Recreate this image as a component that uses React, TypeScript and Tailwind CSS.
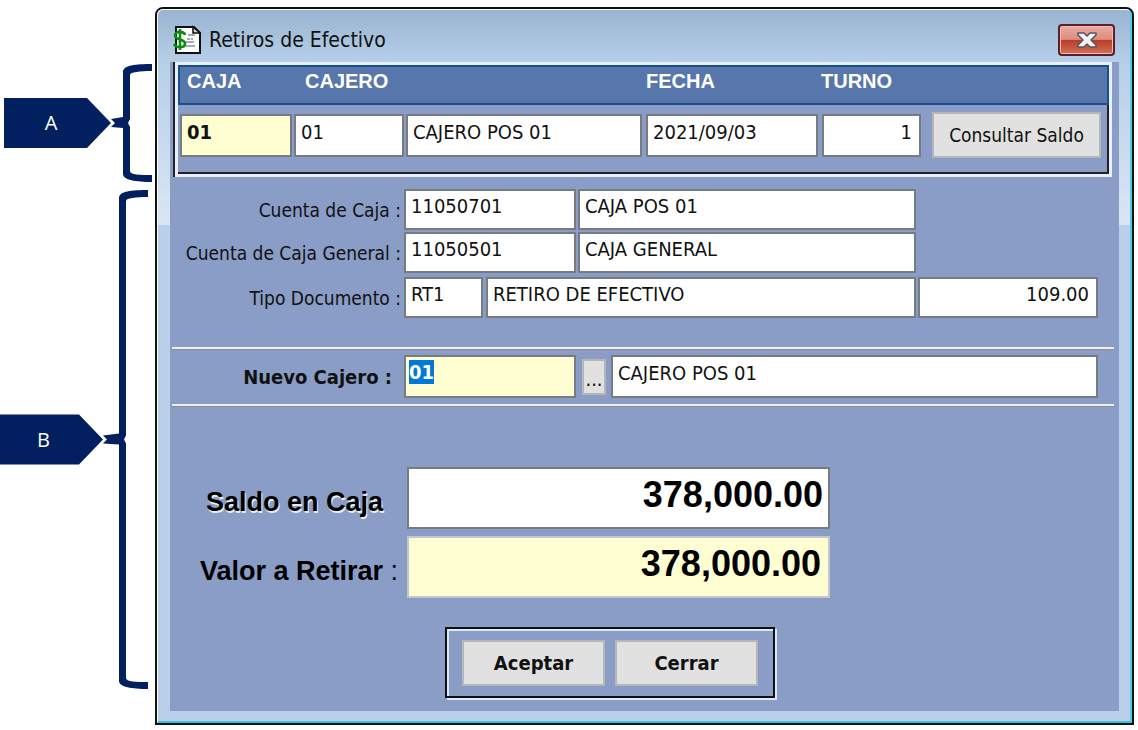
import { useEffect, useRef } from "react";
import type { ReactNode } from "react";
import clsx from "clsx";

type FieldProps = {
  id?: string;
  label?: string;
  value: string;
  className?: string;
};

function Field({ id, label, value, className }: FieldProps) {
  return (
    <input
      id={id}
      aria-label={label}
      defaultValue={value}
      className={clsx(
        "min-w-0 rounded-none border-2 border-[#777b82] px-[5px] pb-[7px] leading-6 outline-none",
        className
      )}
    />
  );
}

type CalloutProps = {
  letter: string;
  height: number;
  tipX: number;
  braceX: number;
  className?: string;
};

function Callout({ letter, height, tipX, braceX, className }: CalloutProps) {
  const mid = height / 2;
  const end = height;
  const inner = braceX + 7;
  const armEnd = braceX + 29;

  return (
    <div className="relative flex items-center">
      <svg width="152" height={height} viewBox={`0 0 152 ${height}`} fill="#02205f" aria-hidden="true">
        <path d={`M${tipX - 107} ${mid - 25}H${tipX - 24}L${tipX} ${mid}L${tipX - 24} ${mid + 25}H${tipX - 107}Z`} />
        <path
          d={`M${armEnd} 0C${armEnd - 16} 0 ${braceX} 1 ${braceX} 8V${mid - 6}L${tipX} ${mid - 4}L${tipX + 4} ${mid}L${tipX} ${mid + 4}L${braceX} ${mid + 5}V${end - 8}C${braceX} ${end - 2} ${armEnd - 16} ${end} ${armEnd} ${end}V${end - 7}C${armEnd - 12} ${end - 7} ${inner} ${end - 7} ${inner} ${end - 11}V${mid + 4}L${inner - 2} ${mid}L${inner} ${mid - 4}V11C${inner} 8 ${armEnd - 12} 7 ${armEnd} 7Z`}
        />
      </svg>
      <span
        className={clsx(
          "absolute text-center font-['Open_Sans',sans-serif] text-xl leading-6 text-white",
          className
        )}
      >
        {letter}
      </span>
    </div>
  );
}

function DocumentIcon() {
  return (
    <svg width="28" height="30" viewBox="0 0 28 30" aria-hidden="true">
      <path d="M3 2H21L27 8V28H3Z" fill="#fff" stroke="#111" strokeWidth="2" />
      <path d="M20 2V8H27Z" fill="#d8d8d8" stroke="#111" strokeWidth="1.6" />
      <path d="M15 10H22M14 14H17M18 14H20M13 17H21M13 21H22" stroke="#8b8f94" strokeWidth="1.6" />
      <path
        d="M12 10C11 6 2 5.500 2 10.500C2 15.500 12 13.500 12 18.500C12 23.500 3 23 1 19M7 4V25"
        fill="none"
        stroke="#0a8a12"
        strokeWidth="2.600"
      />
    </svg>
  );
}

function CloseIcon() {
  return (
    <svg width="20" height="16" viewBox="0 0 20 16" aria-hidden="true">
      <path
        d="M1 1H7L10 4L13 1H19V3L14 8L19 13V15H13L10 12L7 15H1V13L6 8L1 3Z"
        fill="#f3f3f3"
        stroke="#5a5463"
        strokeWidth="1.600"
        strokeLinejoin="round"
      />
    </svg>
  );
}

function FormLabel({ htmlFor, children }: { htmlFor: string; children: ReactNode }) {
  return (
    <label htmlFor={htmlFor} className="w-[234px] shrink-0 pr-[3px] text-right text-[19px] leading-6 whitespace-nowrap">
      {children}
    </label>
  );
}

const buttonClass = "border-2 border-[#b6b6b8] bg-[#e1e1e1] whitespace-nowrap";

function App() {
  const newCashierRef = useRef<HTMLInputElement>(null);

  useEffect(() => {
    newCashierRef.current?.focus();
    newCashierRef.current?.select();
  }, []);

  return (
    <div className="flex min-h-screen items-start overflow-hidden bg-white pt-[7px] pr-1 font-['DejaVu_Sans_Condensed','Noto_Sans',sans-serif] text-xl leading-6 text-[#111]">
      <aside className="flex w-[155px] shrink-0 flex-col gap-2 overflow-hidden pt-[57px]">
        <Callout letter="A" height={118} tipX={111} braceX={123} className="left-1 w-[94px]" />
        <Callout letter="B" height={499} tipX={103} braceX={119} className="left-0 w-[87px]" />
      </aside>

      <main className="min-w-0 flex-1 rounded-t-lg border-2 border-[#111] bg-[#bad0ea] bg-[linear-gradient(#98b3d0,#b7cfe9_54px,#dae6f4_216px,#bad0ea_216px)]">
        <div className="rounded-t-md border-t border-r-2 border-b-2 border-l border-t-white border-r-[#4fc9e6] border-b-[#35c3dc] border-l-white pr-[11px] pb-[10px] pl-3">
          <header className="flex h-[52px] items-center gap-2 pt-2 pl-[3px]">
            <DocumentIcon />
            <h1 className="flex-1 text-[21px]">Retiros de Efectivo</h1>
            <button
              type="button"
              aria-label="Cerrar ventana"
              className="mr-1 flex h-8 w-[57px] items-center justify-center rounded-[4px] border-2 border-[#5b1f28] bg-[linear-gradient(#e9aaa0,#dc8d80_48%,#b93c26_50%,#d27059)] inset-ring inset-ring-[#f0bdb4]"
            >
              <CloseIcon />
            </button>
          </header>

          <form className="bg-[#8a9dc6] pb-[13px]" onSubmit={(e) => e.preventDefault()}>
            <section className="mr-[7px] ml-[3px] border-l-2 border-l-[#222]">
              <div className="border-[3px] border-[#e9f0fc]">
                <div className="flex h-10 items-start border-2 border-[#184f8f] bg-[#5676ac] pl-[7px] font-['Liberation_Sans',sans-serif] leading-7 font-bold text-white">
                  <label htmlFor="caja" className="w-[118px]">CAJA</label>
                  <label htmlFor="cajero" className="flex-1">CAJERO</label>
                  <label htmlFor="fecha" className="w-[175px]">FECHA</label>
                  <label htmlFor="turno" className="w-[286px]">TURNO</label>
                </div>
                <div className="flex items-center border-r-2 border-b-2 border-[#222] pt-[7px] pr-[6px] pb-[14px] pl-[2px]">
                  <Field id="caja" value="01" className="h-[43px] w-28 bg-[#fffed2] font-bold" />
                  <Field id="cajero" value="01" className="ml-[2px] h-[43px] w-[110px] bg-white" />
                  <Field label="Nombre del cajero" value="CAJERO POS 01" className="ml-[2px] h-[43px] flex-1 bg-white" />
                  <Field id="fecha" value="2021/09/03" className="ml-1 h-[43px] w-[172px] bg-white" />
                  <Field id="turno" value="1" className="ml-1 h-[43px] w-[99px] bg-white pr-[7px] text-right" />
                  <button type="button" className={clsx(buttonClass, "ml-[11px] h-[46px] w-[169px] text-[19px]")}>
                    Consultar Saldo
                  </button>
                </div>
              </div>
            </section>

            <section className="pt-3">
              <div className="flex items-center">
                <FormLabel htmlFor="cuenta-caja">Cuenta de Caja :</FormLabel>
                <Field id="cuenta-caja" value="11050701" className="h-[41px] w-[172px] bg-white" />
                <Field label="Nombre de la cuenta de caja" value="CAJA POS 01" className="mr-[203px] ml-[2px] h-[41px] flex-1 bg-white" />
              </div>
              <div className="mt-[2px] flex items-center">
                <FormLabel htmlFor="cuenta-general">Cuenta de Caja General :</FormLabel>
                <Field id="cuenta-general" value="11050501" className="h-[41px] w-[172px] bg-white" />
                <Field label="Nombre de la cuenta general" value="CAJA GENERAL" className="mr-[203px] ml-[2px] h-[41px] flex-1 bg-white" />
              </div>
              <div className="mt-1 flex items-center">
                <FormLabel htmlFor="tipo">Tipo Documento :</FormLabel>
                <Field id="tipo" value="RT1" className="h-[41px] w-[79px] bg-white" />
                <Field label="Nombre del documento" value="RETIRO DE EFECTIVO" className="ml-[3px] h-[41px] flex-1 bg-white" />
                <Field label="Número" value="109.00" className="mr-[21px] ml-[2px] h-[41px] w-[180px] bg-white pr-[7px] text-right" />
              </div>
            </section>

            <section className="mr-[5px] ml-[2px] mt-[29px] border-t-2 border-b-2 border-[#eceef2] py-[6px] shadow-[0_1px_0_#8f8f8f,inset_0_1px_0_#8f8f8f]">
              <div className="flex items-center">
                <label htmlFor="nuevo" className="w-[232px] pr-3 text-right font-bold whitespace-nowrap">
                  Nuevo Cajero :
                </label>
                <input
                  id="nuevo"
                  ref={newCashierRef}
                  defaultValue="01"
                  className="h-[43px] w-[172px] rounded-none border-2 border-[#777b82] bg-[#fffed2] px-[3px] pb-[9px] leading-6 font-bold caret-transparent outline-none selection:bg-[#0078d7] selection:text-white"
                />
                <button type="button" aria-label="Buscar cajero" className={clsx(buttonClass, "ml-[6px] h-9 w-6 overflow-hidden pt-1")}>
                  ...
                </button>
                <Field label="Nombre del nuevo cajero" value="CAJERO POS 01" className="mr-4 ml-[5px] h-[43px] flex-1 bg-white" />
              </div>
            </section>

            <section className="pt-[61px] font-['Liberation_Sans',sans-serif] font-bold text-black">
              <div className="flex items-center">
                <label htmlFor="saldo" className="w-[237px] pt-2 pl-9 text-[27px] whitespace-nowrap [text-shadow:1px_2px_0_#e8ecf4]">
                  Saldo en Caja
                </label>
                <Field id="saldo" value="378,000.00" className="h-[62px] w-[423px] bg-white text-right text-4xl" />
              </div>
              <div className="mt-[7px] flex items-center">
                <label htmlFor="valor" className="w-[237px] pt-2 pl-[30px] text-[27px] whitespace-nowrap">
                  Valor a Retirar <span className="font-normal">:</span>
                </label>
                <Field id="valor" value="378,000.00" className="h-[62px] w-[423px] border-[#c4c6cb] bg-[#fffed2] pr-[7px] text-right text-4xl" />
              </div>
            </section>

            <div className="mt-[29px] ml-[275px] flex w-[330px] gap-[10px] border-2 border-[#111] px-[15px] pt-[11px] pb-[10px] font-bold shadow-[2px_2px_0_#dfe8f6,inset_2px_2px_0_#dfe8f6]">
              <button type="submit" className={clsx(buttonClass, "h-[46px] flex-1")}>
                Aceptar
              </button>
              <button type="button" className={clsx(buttonClass, "h-[46px] flex-1")}>
                Cerrar
              </button>
            </div>
          </form>
        </div>
      </main>
    </div>
  );
}

export default App;
